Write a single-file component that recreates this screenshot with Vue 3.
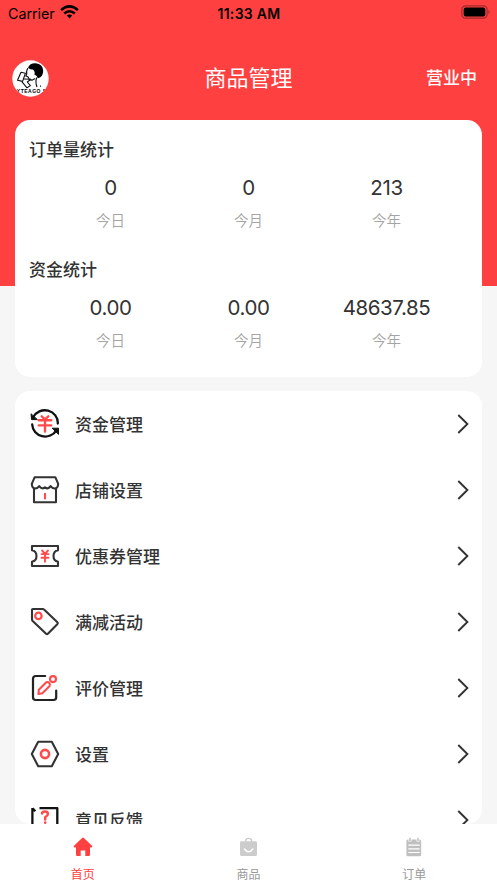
<script setup>
const stats = [
  { title: '订单量统计', values: [['0', '今日'], ['0', '今月'], ['213', '今年']] },
  { title: '资金统计', values: [['0.00', '今日'], ['0.00', '今月'], ['48637.85', '今年']] },
]
const menu = [
  { icon: 'money', label: '资金管理' },
  { icon: 'shop', label: '店铺设置' },
  { icon: 'coupon', label: '优惠券管理' },
  { icon: 'tag', label: '满减活动' },
  { icon: 'edit', label: '评价管理' },
  { icon: 'gear', label: '设置' },
  { icon: 'help', label: '意见反馈' },
]
const tabs = [
  { icon: 'home', label: '首页' },
  { icon: 'bag', label: '商品' },
  { icon: 'order', label: '订单' },
]
</script>

<template>
  <div class="page">
    <div class="banner"></div>
    <div class="status">
      <div class="carrier">
        <span>Carrier</span>
        <svg width="19" height="14" viewBox="0 0 19 14">
          <g fill="none" stroke="#000" stroke-width="2.5">
            <path d="M1.1 5.1Q9.5-2.4 17.9 5.1" />
            <path d="M4.2 8.5Q9.5 3.9 14.8 8.5" />
          </g>
          <path d="M6.8 10.6Q9.5 8.5 12.2 10.6L9.5 13.5Z" />
        </svg>
      </div>
      <span class="time">11:33 AM</span>
      <svg class="battery" width="30" height="14" viewBox="0 0 30 14">
        <rect x=".9" y=".8" width="25.2" height="12.4" rx="3.6" fill="none" stroke="#9e2b2b" stroke-width="1.2" />
        <rect x="2.7" y="2.6" width="21.6" height="8.9" rx="2" />
        <path d="M27.5 4.8q2.4 2.2 0 4.4z" fill="#9e2b2b" />
      </svg>
    </div>
    <header class="head">
      <svg class="avatar" width="37" height="37" viewBox="0 0 37 37">
        <defs><clipPath id="face"><circle cx="18.5" cy="18.5" r="18" /></clipPath></defs>
        <circle cx="18.5" cy="18.5" r="18.2" fill="#fff" />
        <g clip-path="url(#face)">
          <path d="M16 7.5Q18 3 23.5 3.2Q31 4 31.2 11Q30.8 17.5 25.8 18.2Q25.3 15.5 22.4 14.4Q23.5 11.4 20.8 9.4Q18 9.8 16 7.5Z" />
          <g fill="none" stroke="#111" stroke-width="1.1" stroke-linejoin="round">
            <path d="M16 8Q13.8 11.5 14.8 14L13.8 16L16 16.8Q17 20 20 20.2L23.2 18.5M24.8 17.5Q23 22 25 27" />
            <path d="M9 12.3L13.4 13.2L10.6 21.4L5.5 20.3Z" />
            <path d="M11.5 19L19 19.3L15.3 22L18.4 25.6L15 27.8L10 21.8" />
            <path d="M28.5 25.5v1.2" />
          </g>
          <text x="18.2" y="32.8" text-anchor="middle">LYTEAGO S</text>
        </g>
      </svg>
      <h1>商品管理</h1>
      <span class="open">营业中</span>
    </header>

    <section class="card stats">
      <div v-for="s in stats" :key="s.title" class="stat">
        <h2>{{ s.title }}</h2>
        <div class="values">
          <div v-for="v in s.values" :key="v[1]" class="value">
            <b>{{ v[0] }}</b>
            <span>{{ v[1] }}</span>
          </div>
        </div>
      </div>
    </section>

    <section class="card menu">
      <div v-for="m in menu" :key="m.icon" class="row">
        <svg class="icon" width="30" height="30" viewBox="0 0 30 30" fill="none" stroke="#333" stroke-width="2.1" stroke-linejoin="round" stroke-linecap="round">
          <template v-if="m.icon === 'money'">
            <path d="M3.2 8.2A13 12.6 0 0 1 27.8 14.5M26.4 21.3A13 12.6 0 0 1 2.2 15.5" stroke="#111" stroke-width="2.3" />
            <path d="M1.1 5.2L1.5 10.6H7ZM22.5 19.2H28.5V25Z" fill="#111" stroke="#111" stroke-width="1" />
            <path class="red" d="M11.7 7.3L15 10.3L18.3 7.3M8.8 11.3H21.2M8.8 16.4H21.2M15 11V22.5" stroke-width="2.4" />
          </template>
          <template v-else-if="m.icon === 'shop'">
            <path d="M4.7 2.2H25.3L28.2 8.8Q28 13.5 24.8 13.5Q22.3 13.5 20.6 11.2Q18.2 14.8 15 12.3Q12 14.8 9.3 11.2Q7.6 13.5 5.1 13.5Q1.9 13.3 1.8 8.8Z" />
            <path d="M4 13.5V27.2H26V13.5" />
            <path class="red" d="M15 18.7V23.5" />
          </template>
          <template v-else-if="m.icon === 'coupon'">
            <path d="M2 5H28V9.3C22 10.5 22 19.5 28 20.7V25H2V20.7C8 19.5 8 10.5 2 9.3Z" />
            <path class="red" d="M12.1 9.5L15 12.8L18 9.5M11.5 13.1H18.5M11.5 16.7H18.5M15 13V20.8" stroke-width="1.9" />
          </template>
          <template v-else-if="m.icon === 'tag'">
            <path d="M3 2H12.6Q13.5 2 14.3 2.7L27.4 15.2Q28.3 16 27.5 16.9L17.9 26.8Q17 27.7 16.1 26.8L2.7 14Q2 13.3 2 12.2V3Q2 2 3 2Z" />
            <circle class="red" cx="8.4" cy="8.9" r="3.2" stroke-width="2.2" />
          </template>
          <template v-else-if="m.icon === 'edit'">
            <path d="M15.2 3H5.7Q3 3 3 5.7V24.3Q3 27 5.7 27H23.5Q26.2 27 26.2 24.3V17.6" stroke="#222" stroke-width="2.2" />
            <path class="red" d="M8.5 21L8.8 16.8L16.3 9.2Q17.8 8.5 19.2 10T19.7 13L12.3 20.3Z" />
            <circle class="red" cx="23" cy="6.1" r="3" />
          </template>
          <template v-else-if="m.icon === 'gear'">
            <path d="M8.2 2.8H21.8L28.2 15L21.8 27.2H8.2L1.8 15Z" />
            <circle class="red" cx="15" cy="15" r="4.1" stroke-width="2.6" />
          </template>
          <template v-else>
            <path d="M2.4 3V28M2.5 3.2L5.3 6.2M9.5 3.2H27.3V28" stroke="#111" stroke-linecap="butt" stroke-width="2.3" />
            <path class="red" d="M12 8.5Q12.2 6.6 15 6.6T17.9 8.9Q17.9 10.5 15.2 12.2V14.5M15.2 17.5V17.8" stroke-width="2.5" />
          </template>
        </svg>
        <span class="label">{{ m.label }}</span>
        <svg width="12" height="20" viewBox="0 0 12 20"><path d="M1.3 1L10.4 10L1.3 19" fill="none" stroke="#333" stroke-width="1.9" /></svg>
      </div>
    </section>

    <nav class="tabs">
      <div v-for="t in tabs" :key="t.icon" class="tab" :class="{ active: t.icon === 'home' }">
        <svg width="20" height="20" viewBox="0 0 20 20">
          <template v-if="t.icon === 'home'">
            <path fill="#ff4040" d="M9.1 1Q10 .2 10.9 1L19 8.7Q20 10.5 18.5 10.5H17V17.7Q17 19 15.7 19H12.3V13.4H7.7V19H4.3Q3 19 3 17.7V10.5H1.5Q0 10.5 1 8.7Z" />
          </template>
          <template v-else-if="t.icon === 'bag'">
            <path d="M6.7 5V4Q6.7 1.4 9.7 1.4T12.7 4V5" fill="none" stroke="#ccc" stroke-width="1.4" />
            <rect x="1" y="4.2" width="17" height="14.7" rx="1.3" fill="#ccc" />
            <path d="M5.4 12Q9.6 17.7 13.8 12" fill="none" stroke="#fff" stroke-width="1.5" stroke-linecap="round" />
          </template>
          <template v-else>
            <rect x="2.4" y="2.5" width="14.8" height="16.7" rx="1.5" fill="#c0c0c0" />
            <path d="M6 1V4.4M14 1V4.4" stroke="#fff" stroke-width="3" />
            <path d="M6 .8V4M14 .8V4" stroke="#c0c0c0" stroke-width="1.5" />
            <path d="M4.3 8.1H15.7M4.3 11.8H15.7M4.3 15.5H15.7" stroke="#fff" stroke-width="1.2" />
          </template>
        </svg>
        <span>{{ t.label }}</span>
      </div>
    </nav>
  </div>
</template>

<style>
body { margin: 0; background: #f6f6f6; }
</style>

<style scoped>
.page {
  position: relative;
  display: flex;
  flex-direction: column;
  height: 883px;
  overflow: hidden;
  background: #f6f6f6;
  font-family: Inter, "Noto Sans CJK SC", sans-serif;
  color: #333;
}
.page > * { position: relative; flex-shrink: 0; }
.page > .banner { position: absolute; top: 0; left: 0; right: 0; height: 285.5px; background: #ff4040; }
.status {
  display: grid;
  grid-template-columns: 1fr auto 1fr;
  align-items: center;
  height: 26px;
  padding: 0 7px 0 8px;
  color: #000;
  font-size: 14.3px;
}
.carrier { display: flex; align-items: center; gap: 5px; letter-spacing: -.04px; }
.carrier svg { margin-bottom: 2px; }
.time { font-weight: 600; font-size: 14px; letter-spacing: .3px; }
.battery { justify-self: end; margin: 0 -1px 2px 0; }
.head {
  display: grid;
  grid-template-columns: 1fr auto 1fr;
  align-items: center;
  height: 94px;
  box-sizing: border-box;
  padding: 10px 20px 0 12px;
  color: #fff;
}
.avatar text { font: 700 5px "Liberation Sans", sans-serif; letter-spacing: .5px; }
h1 { margin: 0 0 0 8px; font-size: 22px; font-weight: 400; line-height: 30px; }
.open { justify-self: end; font-size: 17px; line-height: 24px; font-weight: 500; }
.card { margin: 0 15px; background: #fff; border-radius: 15px; }
.stats { height: 257px; box-sizing: border-box; padding-top: 18px; }
.stat { height: 120px; }
h2 { margin: 0 0 0 14px; font-size: 17px; line-height: 24px; font-weight: 500; }
.values { display: grid; grid-template-columns: repeat(3, 138px); justify-content: center; padding-top: 13px; }
.value { display: flex; flex-direction: column; align-items: center; gap: 9px; }
.value b { font-size: 20.5px; line-height: 26px; font-weight: 400; letter-spacing: -.4px; }
.value span { font-size: 14.5px; line-height: 22px; color: #a4a4a4; font-weight: 350; }
.menu { margin-top: 14px; height: 433px; overflow: hidden; }
.row { display: flex; align-items: center; height: 66px; padding: 0 13px 0 15px; }
.label { flex: 1; margin-left: 15px; padding-top: 1px; font-size: 17px; line-height: 24px; font-weight: 500; }
.red { stroke: #ff4b4b; }
.tabs { display: flex; height: 59px; background: #fff; }
.tab { flex: 1; display: flex; flex-direction: column; align-items: center; padding-top: 13px; gap: 9px; font-size: 12px; line-height: 17px; color: #999; }
.tab.active { color: #ff4040; }
</style>
